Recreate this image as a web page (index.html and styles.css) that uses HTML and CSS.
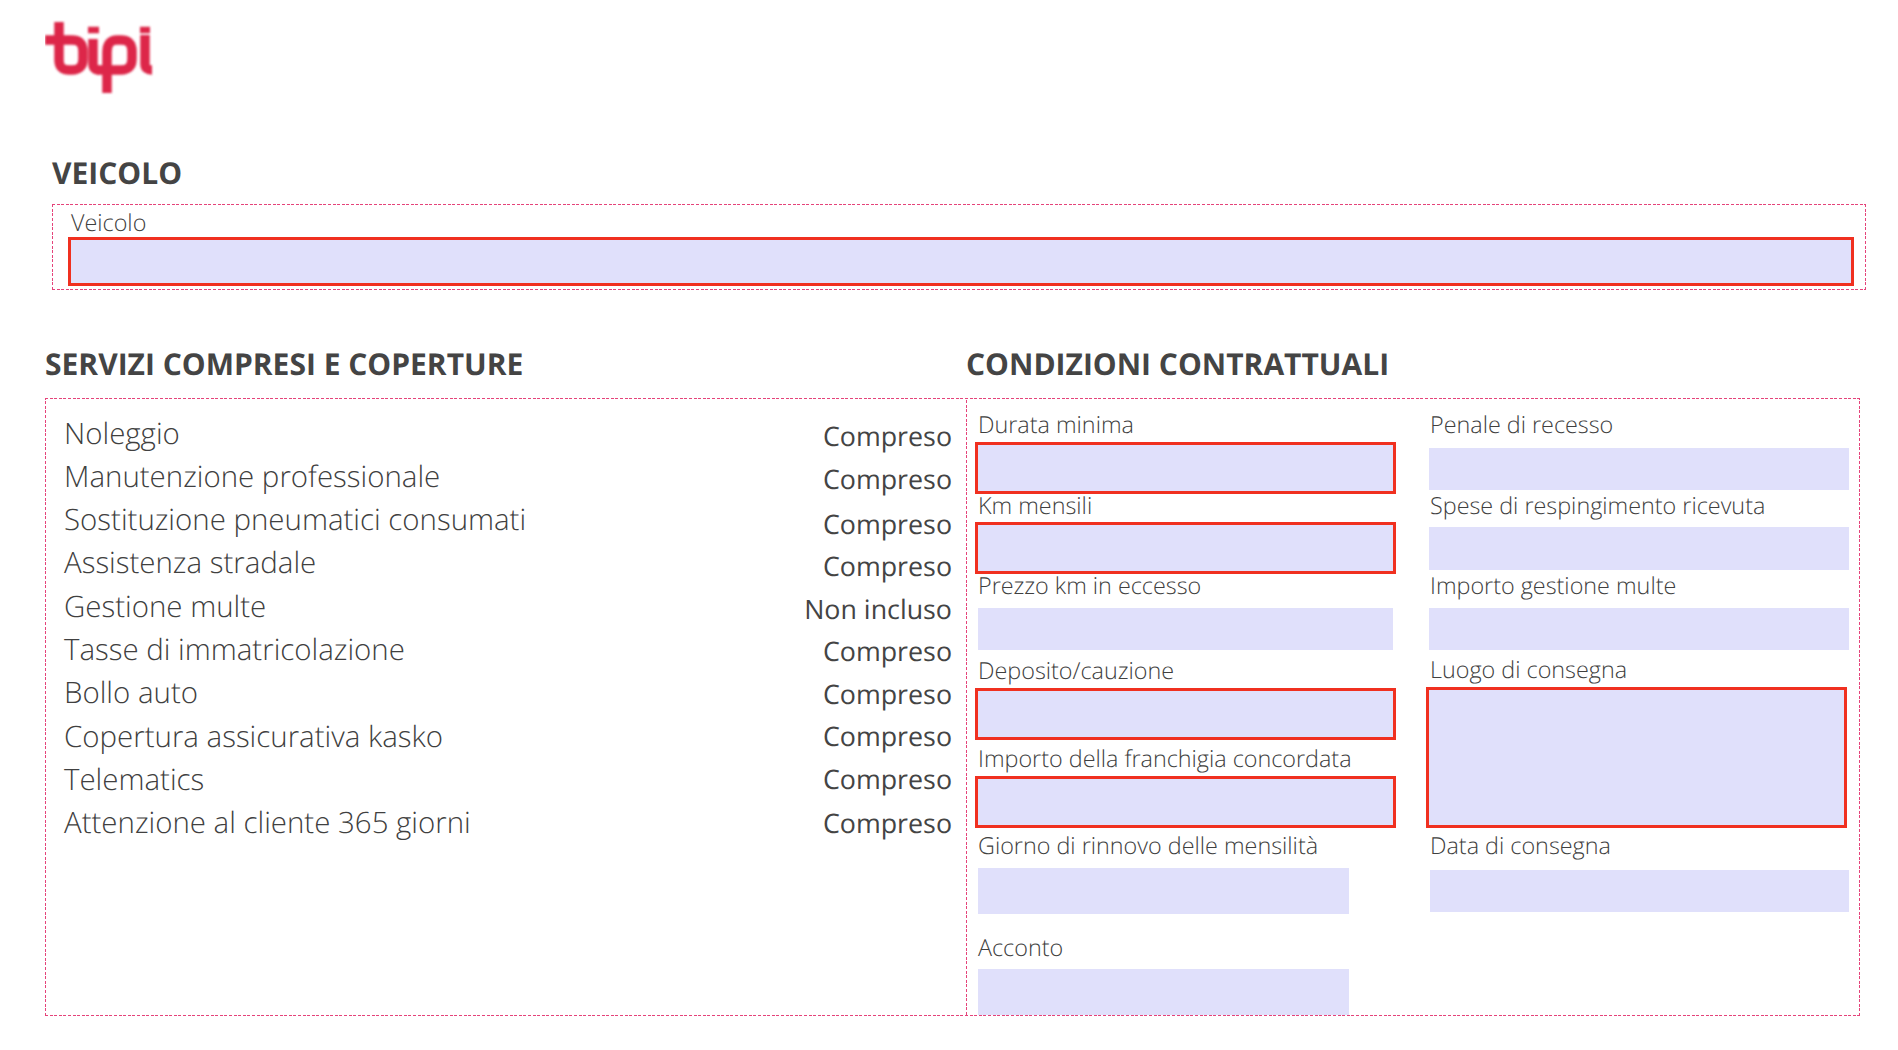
FILE: index.html
```html
<!DOCTYPE html>
<html lang="it">
<head>
<meta charset="utf-8">
<title>Bipi</title>
<link rel="stylesheet" href="styles.css">
</head>
<body>
<header class="logo-wrap">
  <svg class="logo" width="110" height="76" viewBox="0 0 110 76" aria-label="bipi">
    <defs><filter id="soft" x="-10%" y="-10%" width="120%" height="120%"><feGaussianBlur stdDeviation="1"/></filter></defs>
    <g class="logo-art" filter="url(#soft)">
      <path d="M14 2V40Q14 50 24 50H27Q38 50 38 39V31Q38 20 27 20H0" />
      <path d="M48 19V44Q48 50 54 50" />
      <path d="M43 10H54" class="dot"/>
      <path d="M62 73V32Q62 20 72 20H76Q87 20 87 31V39Q87 50 76 50H52" />
      <path d="M100 15V44Q100 50 107 50" />
      <path d="M95 10H105" class="dot"/>
    </g>
  </svg>
</header>

<main>
  <h2 class="heading heading-vehicle">VEICOLO</h2>
  <section class="box box-vehicle">
    <div class="label">Veicolo</div>
    <div class="input req input-vehicle"></div>
  </section>

  <div class="headings">
    <h2 class="heading heading-services">SERVIZI COMPRESI E COPERTURE</h2>
    <h2 class="heading heading-terms">CONDIZIONI CONTRATTUALI</h2>
  </div>

  <section class="box box-main">
    <div class="services">
      <ul class="names">
        <li>Noleggio</li>
        <li>Manutenzione professionale</li>
        <li>Sostituzione pneumatici consumati</li>
        <li>Assistenza stradale</li>
        <li>Gestione multe</li>
        <li>Tasse di immatricolazione</li>
        <li>Bollo auto</li>
        <li>Copertura assicurativa kasko</li>
        <li>Telematics</li>
        <li>Attenzione al cliente 365 giorni</li>
      </ul>
      <ul class="values">
        <li>Compreso</li>
        <li>Compreso</li>
        <li class="down-2">Compreso</li>
        <li class="up">Compreso</li>
        <li>Non incluso</li>
        <li class="up">Compreso</li>
        <li>Compreso</li>
        <li class="up">Compreso</li>
        <li>Compreso</li>
        <li class="down">Compreso</li>
      </ul>
    </div>
    <div class="terms">
      <div class="col col-left">
        <div class="label l-durata">Durata minima</div>
        <div class="input req in-durata"></div>
        <div class="label l-km">Km mensili</div>
        <div class="input req in-km"></div>
        <div class="label l-prezzo">Prezzo km in eccesso</div>
        <div class="input in-prezzo"></div>
        <div class="label l-deposito">Deposito/cauzione</div>
        <div class="input req in-deposito"></div>
        <div class="label l-franchigia">Importo della franchigia concordata</div>
        <div class="input req in-franchigia"></div>
        <div class="label l-giorno">Giorno di rinnovo delle mensilità</div>
        <div class="input in-giorno"></div>
        <div class="label l-acconto">Acconto</div>
        <div class="input in-acconto"></div>
      </div>
      <div class="col col-right">
        <div class="label l-penale">Penale di recesso</div>
        <div class="input in-penale"></div>
        <div class="label l-spese">Spese di respingimento ricevuta</div>
        <div class="input in-spese"></div>
        <div class="label l-multe">Importo gestione multe</div>
        <div class="input in-multe"></div>
        <div class="label l-luogo">Luogo di consegna</div>
        <div class="input req in-luogo"></div>
        <div class="label l-data">Data di consegna</div>
        <div class="input in-data"></div>
      </div>
    </div>
  </section>
</main>
</body>
</html>
```
FILE: styles.css
```css
* { box-sizing: border-box; }
html, body { margin: 0; padding: 0; background: #fff; }
body {
  width: 1898px;
  height: 1050px;
  overflow: hidden;
  font-family: "Open Sans", "Liberation Sans", sans-serif;
  color: #444;
  text-rendering: geometricPrecision;
}

/* logo */
.logo-wrap { height: 150px; padding: 20px 0 0 45px; }
.logo { display: block; }
.logo-art path { fill: none; stroke: #dd2748; stroke-width: 9.5; stroke-linecap: butt; stroke-linejoin: round; }
.logo-art .dot { stroke-width: 6.5; }

/* headings */
.heading { margin: 0; font-size: 30px; line-height: 46px; font-weight: 700; color: #444; }
.heading-vehicle { margin-left: 52px; }
.headings { display: flex; margin-top: 51px; height: 46px; }
.heading-services { width: 966px; padding-left: 45px; }

/* dashed boxes: dash period drawn as gradients */
.box {
  background:
    repeating-linear-gradient(90deg, #e5437a 0 3px, transparent 3px 4.6px) left top / 100% 1px no-repeat,
    repeating-linear-gradient(90deg, #e5437a 0 3px, transparent 3px 4.6px) left bottom / 100% 1px no-repeat,
    repeating-linear-gradient(0deg, #e5437a 0 3px, transparent 3px 4.6px) left top / 1px 100% no-repeat,
    repeating-linear-gradient(0deg, #e5437a 0 3px, transparent 3px 4.6px) right top / 1px 100% no-repeat;
}
.box-vehicle { margin: 8px 0 0 52px; width: 1814px; height: 86px; padding: 4px 0 0 16px; }
.box-main { display: flex; margin: 11px 0 0 45px; width: 1815px; height: 618px; padding: 1px; }

.label { font-size: 23.35px; font-weight: 300; line-height: 28px; padding: 0 0 2px 3px; color: #404040; white-space: nowrap; }
.input { background: #e0e0fb; }
.req { border: 3px solid #f03020; }
.input-vehicle { width: 1786px; height: 49px; margin-top: -1px; }

/* services */
.services { display: flex; justify-content: space-between; width: 920px; padding: 12px 14px 0 18px; }
.names, .values { list-style: none; margin: 0; padding: 0; }
.names { padding-top: 0.6px; }
.names li { font-size: 29.45px; font-weight: 300; line-height: 43.3px; color: #404040; white-space: nowrap; }
.values { text-align: right; padding-top: 3px; }
.values li { font-size: 26.8px; font-weight: 400; line-height: 43px; color: #444; white-space: nowrap; }
.values .down { margin-top: 1px; }
.values .down-2 { margin-top: 2px; }
.values .up { margin-top: -1px; }

/* contract terms */
.terms {
  display: flex;
  flex: 1;
  background: repeating-linear-gradient(0deg, #e5437a 0 3px, transparent 3px 4.6px) left top / 1px 100% no-repeat;
  padding-left: 1px;
}
.col { display: flex; flex-direction: column; }
.col-left { width: 462px; padding: 11px 0 0 8px; }
.col-right { width: 420px; padding: 11px 0 0 0; }
.col-right .label { padding-left: 1px; }

.in-durata { width: 421px; height: 52px; margin-top: 2px; }
.l-km { margin-top: -3px; }
.in-km { width: 421px; height: 52px; margin-top: 1px; }
.l-prezzo { margin-top: -3px; }
.in-prezzo { width: 415px; height: 42px; margin: 7px 0 0 3px; }
.l-deposito { margin-top: 6px; }
.in-deposito { width: 421px; height: 52px; margin-top: 2px; }
.l-franchigia { margin-top: 4px; }
.in-franchigia { width: 421px; height: 52px; margin-top: 2px; }
.l-giorno { margin-top: 3px; }
.in-giorno { width: 371px; height: 46px; margin: 7px 0 0 3px; }
.l-acconto { margin-top: 19px; }
.in-acconto { width: 371px; height: 46px; margin: 6px 0 0 3px; }

.in-penale { width: 420px; height: 42px; margin-top: 8px; }
.l-spese { margin-top: 1px; }
.in-spese { width: 420px; height: 43px; margin-top: 6px; }
.l-multe { margin-top: 1px; }
.in-multe { width: 420px; height: 42px; margin-top: 7px; }
.l-luogo { margin-top: 5px; }
.in-luogo { width: 421px; height: 141px; margin: 2px 0 0 -3px; }
.l-data { margin-top: 3px; }
.in-data { width: 419px; height: 42px; margin: 9px 0 0 1px; }
```
